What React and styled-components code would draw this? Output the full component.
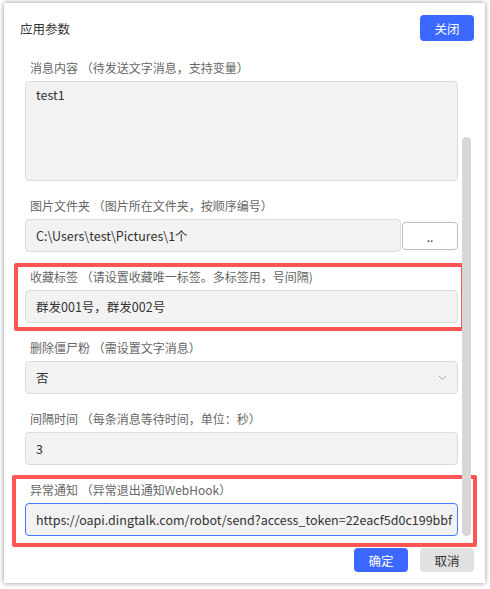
import styled, { createGlobalStyle } from "styled-components";

const GlobalStyle = createGlobalStyle`
  html, body {
    margin: 0;
    padding: 0;
    background: #ffffff;
  }
  body {
    font-family: "Noto Sans CJK SC", "Noto Sans", sans-serif;
  }
`;

const Page = styled.div`
  width: 490px;
  height: 589px;
  padding: 3px 5px 6px 4px;
  box-sizing: border-box;
`;

const Window = styled.div`
  position: relative;
  width: 481px;
  height: 580px;
  background: #ffffff;
  box-shadow: 0 0 5px rgba(0, 0, 0, 0.45);
  display: flex;
  flex-direction: column;
  box-sizing: border-box;
`;

const Header = styled.div`
  display: flex;
  align-items: center;
  justify-content: space-between;
  padding: 12px 11px 0 16px;
`;

const Title = styled.div`
  font-size: 12.5px;
  color: #333;
`;

const Button = styled.button`
  width: 54px;
  height: ${(p) => (p.$tall ? "26px" : "24px")};
  border: none;
  border-radius: 4px;
  font-family: inherit;
  font-size: 12.5px;
  padding: 0;
  cursor: pointer;
  background: ${(p) => (p.$primary ? "#3b69ff" : "#e1e1e1")};
  color: ${(p) => (p.$primary ? "#ffffff" : "#333")};
`;

const Body = styled.div`
  flex: 1;
  display: flex;
  flex-direction: column;
  gap: 17px;
  padding: 19px 27px 0 21px;
`;

const Field = styled.div`
  position: relative;
  display: flex;
  flex-direction: column;
  gap: 5px;

  /* 标注用的红框 */
  &::after {
    content: "";
    display: ${(p) => (p.$mark ? "block" : "none")};
    position: absolute;
    top: ${(p) => p.$mark?.top ?? 0}px;
    bottom: ${(p) => p.$mark?.bottom ?? 0}px;
    left: ${(p) => p.$mark?.left ?? 0}px;
    right: ${(p) => p.$mark?.right ?? 0}px;
    border: 4px solid #fd5454;
    border-radius: 2px;
    pointer-events: none;
  }
`;

const Label = styled.div`
  font-size: 12px;
  line-height: 16px;
  color: #666;
  padding-left: 5px;
  white-space: nowrap;
`;

const Box = styled.div`
  box-sizing: border-box;
  display: flex;
  flex: none;
  align-items: ${(p) => (p.$multi ? "flex-start" : "center")};
  height: ${(p) => (p.$multi ? "100px" : "33px")};
  padding: ${(p) => (p.$multi ? "3px 10px" : "0 10px")};
  background: #f2f2f2;
  border: 1px solid ${(p) => (p.$focus ? "#4a76ff" : "#dcdcdc")};
  border-radius: 4px;
  font-size: 12.5px;
  color: #333;
  white-space: nowrap;
  overflow: hidden;
`;

const Value = styled.span`
  flex: 1;
`;

const Row = styled.div`
  display: flex;
  align-items: center;
  gap: 1px;

  & > ${Box} {
    flex: 1;
  }
`;

const PickButton = styled.button`
  width: 56px;
  height: 28px;
  box-sizing: border-box;
  background: #ffffff;
  border: 1px solid #bdbdbd;
  border-radius: 4px;
  font-family: inherit;
  font-size: 12px;
  color: #333;
  padding: 2px 0 0;
`;

const Scrollbar = styled.div`
  position: absolute;
  left: 458px;
  top: 134px;
  width: 9px;
  height: 399px;
  border-radius: 5px;
  background: #d7d7d7;
`;

const Footer = styled.div`
  display: flex;
  justify-content: flex-end;
  gap: 12px;
  padding: 12px 11px 11px 0;
`;

const Chevron = () => (
  <svg width="9" height="6" viewBox="0 0 9 6">
    <path d="M1 1l3.5 3.5L8 1" fill="none" stroke="#aaa" strokeWidth="1" />
  </svg>
);

export default function App() {
  return (
    <>
      <GlobalStyle />
      <Page>
        <Window>
          <Header>
            <Title>应用参数</Title>
            <Button $primary $tall>关闭</Button>
          </Header>

          <Body>
            <Field>
              <Label>消息内容 （待发送文字消息，支持变量）</Label>
              <Box $multi>test1</Box>
            </Field>

            <Field>
              <Label>图片文件夹 （图片所在文件夹，按顺序编号）</Label>
              <Row>
                <Box>C:\Users\test\Pictures\1个</Box>
                <PickButton>..</PickButton>
              </Row>
            </Field>

            <Field $mark={{ top: -6, bottom: -8, left: -11, right: -7 }}>
              <Label>收藏标签 （请设置收藏唯一标签。多标签用，号间隔)</Label>
              <Box>群发001号，群发002号</Box>
            </Field>

            <Field>
              <Label>删除僵尸粉 （需设置文字消息）</Label>
              <Box>
                <Value>否</Value>
                <Chevron />
              </Box>
            </Field>

            <Field>
              <Label>间隔时间 （每条消息等待时间，单位：秒）</Label>
              <Box>3</Box>
            </Field>

            <Field $mark={{ top: -7, bottom: -11, left: -13, right: -19 }}>
              <Label>异常通知 （异常退出通知WebHook）</Label>
              <Box $focus>
                https://oapi.dingtalk.com/robot/send?access_token=22eacf5d0c199bbf
              </Box>
            </Field>
          </Body>

          <Scrollbar />

          <Footer>
            <Button $primary>确定</Button>
            <Button>取消</Button>
          </Footer>
        </Window>
      </Page>
    </>
  );
}
